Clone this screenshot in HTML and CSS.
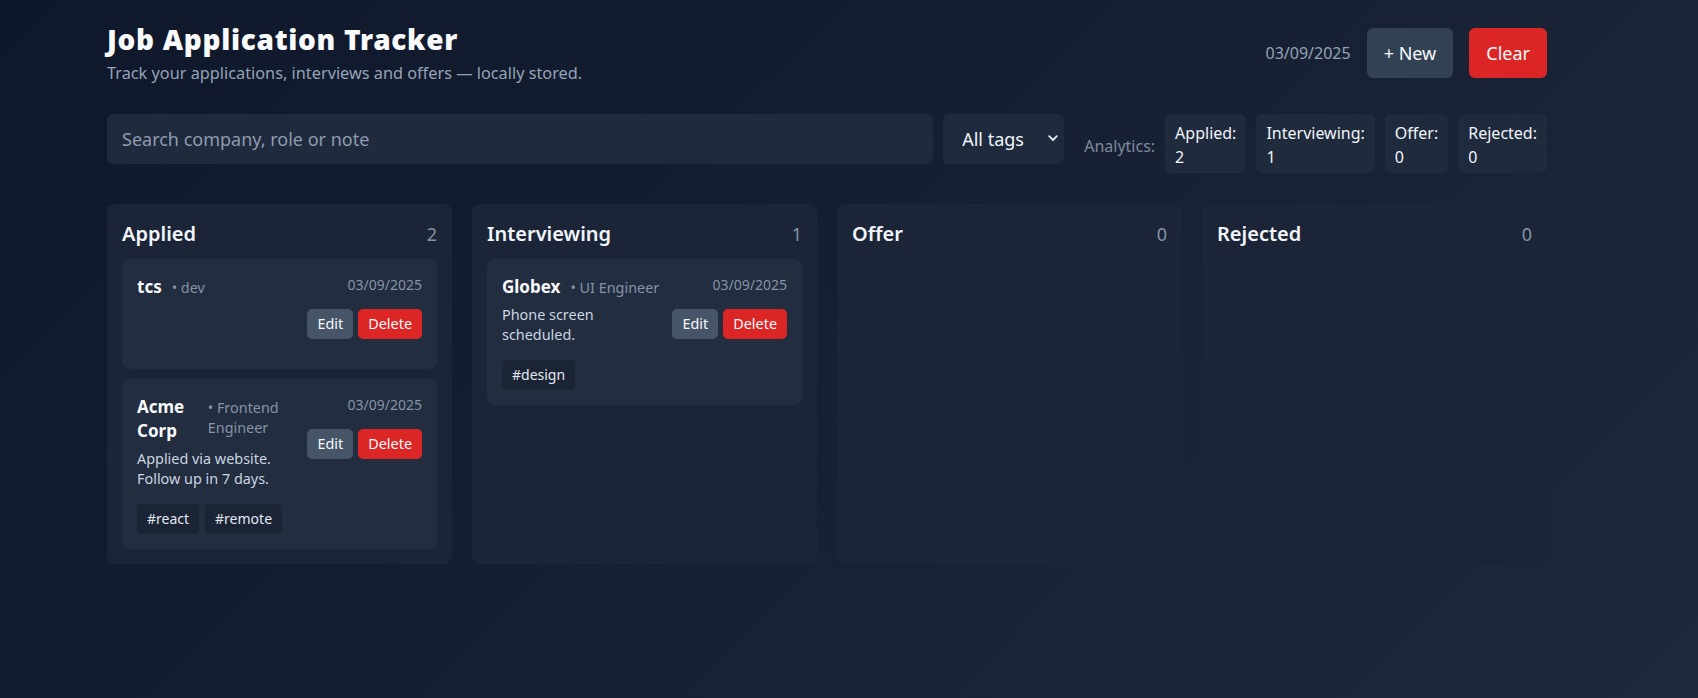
FILE: index.html
```html
<!DOCTYPE html>
<html lang="en">
<head>
<meta charset="utf-8">
<title>Job Application Tracker</title>
<link rel="stylesheet" href="styles.css">
</head>
<body>
<div class="app">
  <header class="header">
    <div class="brand">
      <h1 class="title">Job Application Tracker</h1>
      <p class="subtitle">Track your applications, interviews and offers — locally stored.</p>
    </div>
    <div class="header-actions">
      <span class="today">03/09/2025</span>
      <button class="btn btn-new">+ New</button>
      <button class="btn btn-clear">Clear</button>
    </div>
  </header>

  <div class="toolbar">
    <input class="search" type="text" placeholder="Search company, role or note">
    <div class="select-wrap">
      <select class="tag-select"><option>All tags</option></select>
      <svg class="chevron" width="10" height="7" viewBox="0 0 10 7"><polyline points="1.2,1.2 5,5 8.8,1.2" fill="none" stroke="#e2e8f0" stroke-width="1.8" stroke-linecap="round" stroke-linejoin="round"/></svg>
    </div>
    <div class="analytics">
      <span class="analytics-label">Analytics:</span>
      <div class="stat"><span>Applied:</span><span>2</span></div>
      <div class="stat"><span>Interviewing:</span><span>1</span></div>
      <div class="stat"><span>Offer:</span><span>0</span></div>
      <div class="stat"><span>Rejected:</span><span>0</span></div>
    </div>
  </div>

  <main class="board">
    <section class="column">
      <div class="column-head"><h2 class="column-title">Applied</h2><span class="column-count">2</span></div>
      <div class="cards">
        <article class="card">
          <div class="card-main">
            <div class="card-info">
              <div class="card-title"><span class="company">tcs</span><span class="role">• dev</span></div>
            </div>
            <div class="card-side">
              <div class="card-date">03/09/2025</div>
              <div class="card-actions"><button class="sbtn sbtn-edit">Edit</button><button class="sbtn sbtn-del">Delete</button></div>
            </div>
          </div>
          <div class="tags"></div>
        </article>
        <article class="card">
          <div class="card-main">
            <div class="card-info">
              <div class="card-title"><span class="company">Acme Corp</span><span class="role">• Frontend Engineer</span></div>
              <div class="notes">Applied via website. Follow up in 7 days.</div>
            </div>
            <div class="card-side">
              <div class="card-date">03/09/2025</div>
              <div class="card-actions"><button class="sbtn sbtn-edit">Edit</button><button class="sbtn sbtn-del">Delete</button></div>
            </div>
          </div>
          <div class="tags"><span class="tag">#react</span><span class="tag">#remote</span></div>
        </article>
      </div>
    </section>

    <section class="column">
      <div class="column-head"><h2 class="column-title">Interviewing</h2><span class="column-count">1</span></div>
      <div class="cards">
        <article class="card">
          <div class="card-main">
            <div class="card-info">
              <div class="card-title"><span class="company">Globex</span><span class="role">• UI Engineer</span></div>
              <div class="notes">Phone screen scheduled.</div>
            </div>
            <div class="card-side">
              <div class="card-date">03/09/2025</div>
              <div class="card-actions"><button class="sbtn sbtn-edit">Edit</button><button class="sbtn sbtn-del">Delete</button></div>
            </div>
          </div>
          <div class="tags"><span class="tag">#design</span></div>
        </article>
      </div>
    </section>

    <section class="column">
      <div class="column-head"><h2 class="column-title">Offer</h2><span class="column-count">0</span></div>
      <div class="cards"></div>
    </section>

    <section class="column">
      <div class="column-head"><h2 class="column-title">Rejected</h2><span class="column-count">0</span></div>
      <div class="cards"></div>
    </section>
  </main>
</div>
</body>
</html>
```

FILE: styles.css
```css
* { box-sizing: border-box; }

html, body {
  margin: 0;
  min-height: 100%;
}

body {
  min-height: 100vh;
  background: linear-gradient(135deg, #0f172a 0%, #1e293b 100%);
  color: #e2e8f0;
  font-family: "Noto Sans", "Open Sans", sans-serif;
}

.app {
  width: 1440px;
  margin-left: 107px;
  padding-top: 22px;
}

/* Header */
.header {
  display: flex;
  align-items: center;
  justify-content: space-between;
}

.title {
  margin: 0;
  font-size: 28px;
  line-height: 34px;
  font-weight: 900;
  letter-spacing: 0.7px;
  color: #f8fafc;
}

.subtitle {
  margin: 6px 0 0;
  font-size: 16.3px;
  line-height: 22px;
  color: #94a3b8;
}

.header-actions {
  display: flex;
  align-items: center;
  gap: 16px;
}

.today {
  font-size: 16px;
  color: #94a3b8;
}

.btn {
  border: 0;
  border-radius: 6px;
  font-family: inherit;
  font-size: 18px;
  line-height: 26px;
  padding: 12px 17px;
  color: #f8fafc;
  cursor: pointer;
}

.btn-new { background: #334155; }
.btn-clear { background: #dc2626; }

/* Toolbar */
.toolbar {
  display: flex;
  align-items: flex-start;
  gap: 10px;
  margin-top: 30px;
}

.search {
  flex: 1;
  min-width: 0;
  height: 50px;
  border: 0;
  border-radius: 6px;
  background: #1f2a3d;
  color: #e2e8f0;
  font-family: inherit;
  font-size: 18px;
  padding: 0 15px;
  outline: none;
}

.search::placeholder { color: #8e9bb0; }

.select-wrap {
  position: relative;
  width: 121px;
  height: 50px;
}

.tag-select {
  appearance: none;
  -webkit-appearance: none;
  width: 100%;
  height: 100%;
  border: 0;
  border-radius: 6px;
  background: #1f2a3d;
  color: #f1f5f9;
  font-family: inherit;
  font-size: 18px;
  padding: 0 28px 0 19px;
  outline: none;
}

.chevron {
  position: absolute;
  right: 6px;
  top: 21px;
  pointer-events: none;
}

.analytics {
  display: flex;
  align-items: center;
  gap: 10px;
  margin-left: 10px;
}

.analytics-label {
  font-size: 16px;
  color: #7d8aa0;
  padding-top: 4px;
}

.stat {
  display: flex;
  flex-direction: column;
  background: #1f2a3d;
  border-radius: 6px;
  padding: 7px 10px 4px;
  font-size: 16px;
  line-height: 24px;
  color: #f1f5f9;
}

/* Board */
.board {
  display: grid;
  grid-template-columns: repeat(4, 1fr);
  gap: 20px;
  margin-top: 31px;
}

.column {
  background: #1b2537;
  border-radius: 8px;
  padding: 16px 15px 15px;
  min-height: 360px;
}

.column-head {
  display: flex;
  justify-content: space-between;
  align-items: baseline;
  margin-bottom: 11px;
}

.column-title {
  margin: 0;
  font-size: 20px;
  line-height: 28px;
  font-weight: 600;
  color: #f1f5f9;
}

.column-count {
  font-size: 18px;
  color: #8493a8;
}

.cards {
  display: flex;
  flex-direction: column;
  gap: 10px;
}

.card {
  background: #222d3f;
  border-radius: 8px;
  padding: 16px 15px 15px;
}

.card-main {
  display: flex;
  gap: 10px;
}

.card-info {
  flex: 1;
  min-width: 0;
}

.card-title {
  display: flex;
  align-items: baseline;
  gap: 10px;
}

.company {
  font-size: 17px;
  line-height: 24px;
  font-weight: 700;
  color: #f8fafc;
}

.role {
  font-size: 14.4px;
  line-height: 20px;
  color: #8493a8;
}

.notes {
  margin-top: 6px;
  font-size: 14.4px;
  line-height: 20px;
  color: #cbd5e1;
}

.card-side {
  display: flex;
  flex-direction: column;
  align-items: flex-end;
  gap: 14px;
}

.card-date {
  font-size: 14px;
  line-height: 20px;
  color: #8493a8;
}

.card-actions {
  display: flex;
  gap: 5px;
}

.sbtn {
  border: 0;
  border-radius: 5px;
  font-family: inherit;
  font-size: 14.4px;
  line-height: 18px;
  padding: 6px 10px;
  color: #f8fafc;
  cursor: pointer;
}

.sbtn-edit { background: #475569; }
.sbtn-del { background: #dc2626; }

.tags {
  display: flex;
  flex-wrap: wrap;
  gap: 6px;
  margin-top: 15px;
}

.tag {
  background: #1b2435;
  border-radius: 5px;
  padding: 5px 10px;
  font-size: 14px;
  line-height: 20px;
  color: #e2e8f0;
}
```
